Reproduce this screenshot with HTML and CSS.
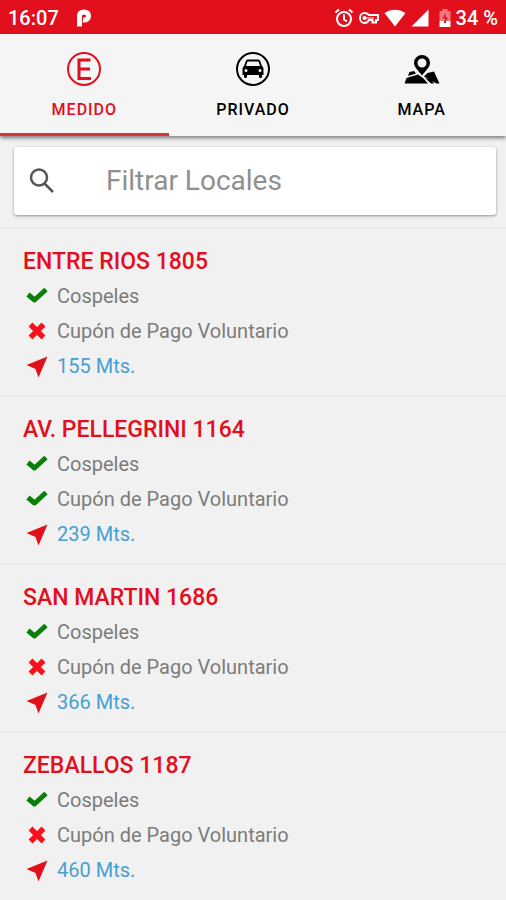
FILE: index.html
```html
<!DOCTYPE html>
<html lang="es">
  <head>
    <meta charset="UTF-8">
    <meta name="viewport" content="width=device-width, initial-scale=1">
    <title>Locales</title>
    <link rel="stylesheet" href="styles.css">
  </head>
  <body>
    <!-- shared icons -->
    <svg class="sprite" aria-hidden="true">
      <symbol id="check" viewBox="0 0 22 22">
        <path d="M2 8.500L8.500 14L20 3.500" fill="none" stroke="currentColor" stroke-width="5" stroke-linejoin="round"/>
      </symbol>
      <symbol id="cross" viewBox="0 0 22 22">
        <path d="M4.500 3.500L17.500 16.500M17.500 3.500L4.500 16.500" fill="none" stroke="currentColor" stroke-width="5.500"/>
      </symbol>
      <symbol id="arrow" viewBox="0 0 22 22">
        <path d="M21.500 0.500L12.500 21.500L9.500 13L0.500 9Z" fill="currentColor"/>
      </symbol>
    </svg>

    <div class="status-bar">
      <span class="clock">16:07</span>
      <svg class="app-mark" width="16" height="18" viewBox="0 0 16 18">
        <path d="M3.500 17.500V7C3.500 4 5.500 3 8 3C11 3 12.500 4.500 12.500 7C12.500 10 10.500 11.500 7 11" fill="none" stroke="#fff" stroke-width="5"/>
      </svg>
      <div class="status-icons">
        <svg width="20" height="20" viewBox="0 0 20 20" fill="none" stroke="#fff" stroke-width="2">
          <circle cx="10" cy="11" r="7"/>
          <path d="M1.500 4.500L5 1.500M18.500 4.500L15 1.500M10 6.500V11.500L13 13.500"/>
        </svg>
        <svg width="20" height="12" viewBox="0 0 20 12" fill="none" stroke="#fff" stroke-width="2">
          <path d="M10 3H19V8H17V10.500H13.500V8H10C9 10 7.500 11 5.500 11C3 11 1 9 1 6C1 3 3 1 5.500 1C7.500 1 9 2 10 3Z"/>
          <circle cx="5.500" cy="6" r="1"/>
          <path d="M7 6H15" stroke-width="1"/>
        </svg>
        <svg width="22" height="18" viewBox="0 0 22 18" fill="#fff">
          <path d="M0.500 4C7 -0.500 15 -0.500 21.500 4L11 17.500Z"/>
        </svg>
        <svg width="18" height="18" viewBox="0 0 18 18" fill="#fff">
          <path d="M17.500 0.500V17.500H0.500Z"/>
        </svg>
        <svg class="battery" width="12" height="20" viewBox="0 0 12 20">
          <path d="M0.500 3H3.500V1H8.500V3H11.500V13H0.500Z" fill="#f0777d"/>
          <path d="M6.500 5L3.500 10.500H6V15L9 9.500H6.500Z" fill="#e20f1c"/>
          <path d="M0.500 13H5V15H7V13H11.500V19H0.500Z" fill="#fff"/>
        </svg>
        <span>34 %</span>
      </div>
    </div>

    <nav class="tabs">
      <a class="tab active" href="#medido">
        <svg width="36" height="36" viewBox="0 0 36 36" fill="none" stroke="currentColor">
          <circle cx="18" cy="18" r="16" stroke-width="2"/>
          <path d="M24.500 9H13V27.500H25M13 18H24" stroke-width="3"/>
        </svg>
        <span>MEDIDO</span>
      </a>
      <a class="tab" href="#privado">
        <svg width="36" height="36" viewBox="0 0 36 36">
          <circle cx="18" cy="18" r="16" fill="none" stroke="currentColor" stroke-width="2"/>
          <path fill="currentColor" fill-rule="evenodd" d="M11 9.500Q11.500 8.500 13 8.500H23Q24.500 8.500 25 9.500L27 15Q28.500 16 28.500 18V24H27V26Q27 27 25.500 27Q24 27 24 26V24H12V26Q12 27 10.500 27Q9 27 9 26V24H7.500V18Q7.500 16 9 15ZM12.500 10.500L11 15H25L23.500 10.500ZM11 18A1.500 1.500 0 1 0 11 21A1.500 1.500 0 1 0 11 18ZM25 18A1.500 1.500 0 1 0 25 21A1.500 1.500 0 1 0 25 18Z"/>
        </svg>
        <span>PRIVADO</span>
      </a>
      <a class="tab" href="#mapa">
        <svg width="36" height="36" viewBox="0 0 36 36" fill="currentColor">
          <path fill-rule="evenodd" d="M18 4A8 8 0 0 1 26 12C26 16 21.500 20 18 24.500C14.500 20 10 16 10 12A8 8 0 0 1 18 4ZM18 7.500A4.500 4.500 0 1 0 18 16.500A4.500 4.500 0 1 0 18 7.500Z"/>
          <path d="M5.500 21L10 20L12 22.500L4 25ZM2.500 27L14 23.500L19 27L24 32.500H0.500ZM27 29L30.500 32.500H27L21 27ZM23.500 22L30 20.500L35.500 32.500H32.500L20 25.500Z"/>
        </svg>
        <span>MAPA</span>
      </a>
    </nav>

    <main>
      <div class="search">
        <label for="filter" aria-label="Filtrar">
          <svg width="28" height="28" viewBox="0 0 28 28" fill="none" stroke="#555" stroke-width="2.500">
            <circle cx="11" cy="10.500" r="8"/>
            <path d="M16.500 16.500L25 25"/>
          </svg>
        </label>
        <input id="filter" type="text" placeholder="Filtrar Locales">
      </div>

      <ul class="places">
        <li class="place">
          <h2>ENTRE RIOS 1805</h2>
          <p><svg class="yes"><use href="#check"/></svg>Cospeles</p>
          <p><svg class="no"><use href="#cross"/></svg>Cupón de Pago Voluntario</p>
          <p class="distance"><svg><use href="#arrow"/></svg>155 Mts.</p>
        </li>
        <li class="place">
          <h2>AV. PELLEGRINI 1164</h2>
          <p><svg class="yes"><use href="#check"/></svg>Cospeles</p>
          <p><svg class="yes"><use href="#check"/></svg>Cupón de Pago Voluntario</p>
          <p class="distance"><svg><use href="#arrow"/></svg>239 Mts.</p>
        </li>
        <li class="place">
          <h2>SAN MARTIN 1686</h2>
          <p><svg class="yes"><use href="#check"/></svg>Cospeles</p>
          <p><svg class="no"><use href="#cross"/></svg>Cupón de Pago Voluntario</p>
          <p class="distance"><svg><use href="#arrow"/></svg>366 Mts.</p>
        </li>
        <li class="place">
          <h2>ZEBALLOS 1187</h2>
          <p><svg class="yes"><use href="#check"/></svg>Cospeles</p>
          <p><svg class="no"><use href="#cross"/></svg>Cupón de Pago Voluntario</p>
          <p class="distance"><svg><use href="#arrow"/></svg>460 Mts.</p>
        </li>
      </ul>
    </main>
  </body>
</html>
```
FILE: styles.css
```css
* {
  box-sizing: border-box;
}

body {
  margin: 0;
  background: #f1f1f1;
  color: #7c7c7c;
  font-family: Roboto, "Liberation Sans", sans-serif;
}

.sprite {
  display: none;
}

.status-bar {
  display: flex;
  align-items: center;
  height: 34px;
  padding: 2px 8px 0;
  background: #e20f1c;
  color: #fff;
  font-size: 20px;
  font-weight: 500;
}

.app-mark {
  margin-left: 17px;
}

.status-icons {
  display: flex;
  align-items: center;
  gap: 5px;
  margin-left: auto;
}

.battery {
  margin-left: 5px;
}

.tabs {
  position: relative;
  display: flex;
  background: #f5f5f5;
  box-shadow: 0 2px 4px rgba(0, 0, 0, 0.5);
}

.tab {
  display: flex;
  flex: 1;
  flex-direction: column;
  align-items: center;
  gap: 13px;
  padding: 17px 0 13px;
  border-bottom: 3px solid transparent;
  color: #000;
  font-size: 16px;
  font-weight: 500;
  line-height: 20px;
  letter-spacing: 1px;
  text-decoration: none;
}

.tab.active {
  border-bottom-color: #d9343a;
  color: #e20f1c;
}

.search {
  display: flex;
  align-items: center;
  height: 68px;
  margin: 11px 10px 13px 14px;
  padding: 0 14px;
  background: #fff;
  border-radius: 3px;
  box-shadow: 0 1px 3px rgba(0, 0, 0, 0.4);
}

.search label {
  display: flex;
}

.search input {
  flex: 1;
  min-width: 0;
  margin-left: 50px;
  padding: 0;
  border: 0;
  outline: 0;
  background: none;
  color: #333;
  font: 28px/36px Roboto, "Liberation Sans", sans-serif;
}

.search input::placeholder {
  color: #8f8f8f;
}

.places {
  margin: 0;
  padding: 0;
  list-style: none;
}

.place {
  padding: 19px 23px 12px;
  border-top: 1px solid #e7e7e7;
}

.place h2 {
  margin: 0 0 3px;
  color: #e20f1c;
  font-size: 23px;
  font-weight: 500;
  line-height: 28px;
}

.place p {
  display: flex;
  align-items: center;
  gap: 9px;
  margin: 0;
  padding-left: 3px;
  font-size: 20px;
  line-height: 35px;
}

.place svg {
  width: 22px;
  height: 22px;
}

.place .yes {
  color: #088008;
}

.place .no {
  color: #f8101a;
}

.place .distance {
  color: #479fd2;
}

.distance svg {
  color: #e20f1c;
}
```
